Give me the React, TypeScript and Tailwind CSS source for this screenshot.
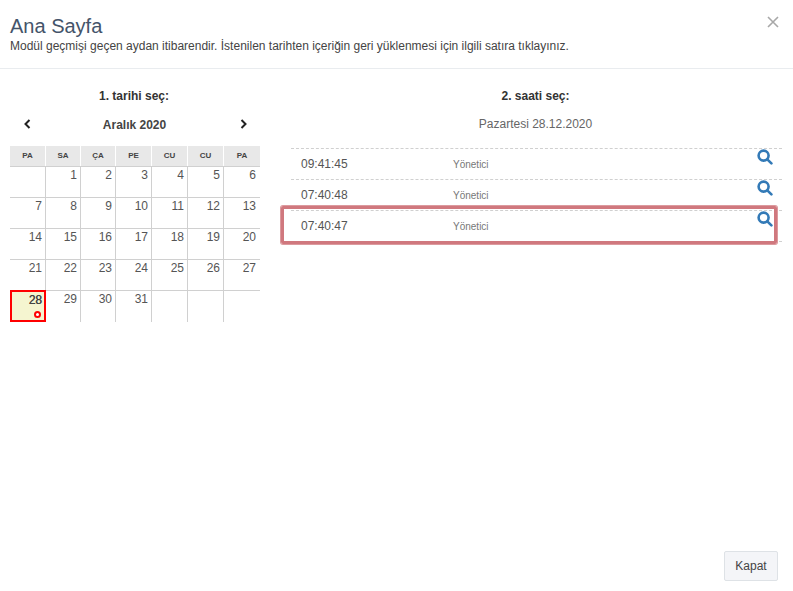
import React from 'react';

const days = ['PA', 'SA', 'ÇA', 'PE', 'CU', 'CU', 'PA'];
const cells: (number | null)[] = [null, ...Array.from({ length: 31 }, (_, i) => i + 1), null, null, null];
const colWidths = 'grid grid-cols-[36px_35px_35px_36px_36px_36px_36px]';
const times = ['09:41:45', '07:40:48', '07:40:47'];

const SearchIcon = () => (
  <svg width="16" height="16" viewBox="0 0 16 16" fill="none" stroke="#337ab7" strokeWidth="2.6">
    <circle cx="6.6" cy="6.6" r="5" />
    <path d="M10.3 10.3 L14.4 14.4" strokeLinecap="round" />
  </svg>
);

const App = () => {
  return (
    <div className="relative flex h-[591px] w-[793px] flex-col overflow-hidden bg-white font-['Liberation_Sans',Arial,sans-serif] text-[#333]">
      <div className="relative h-[69px] border-b border-[#e9ecef] pl-[10px] pt-[14px]">
        <h1 className="text-[20px] leading-[24px] text-[#44546a]">Ana Sayfa</h1>
        <p className="text-[12px] leading-[16px] text-[#444]">
          Modül geçmişi geçen aydan itibarendir. İstenilen tarihten içeriğin geri yüklenmesi için ilgili satıra tıklayınız.
        </p>
        <svg className="absolute left-[767px] top-[16px]" width="12" height="12" viewBox="0 0 12 12" stroke="#a8a8a8" strokeWidth="1.6">
          <path d="M1 1 L11 11 M11 1 L1 11" />
        </svg>
      </div>

      <div className="flex flex-1 pl-[10px]">
        <div className="w-[250px]">
          <div className="pr-[2px] pt-[20px] text-center text-[12px] font-bold leading-[14px]">1. tarihi seç:</div>
          <div className="mt-[12px] flex h-[20px] items-center justify-between pl-[13px] pr-[12px]">
            <svg className="-mt-[2px]" width="9" height="10" viewBox="0 0 9 10" fill="none" stroke="#222" strokeWidth="2">
              <path d="M6.5 1 L2.5 5 L6.5 9" />
            </svg>
            <span className="mr-[2px] text-[12px] font-bold text-[#444]">Aralık 2020</span>
            <svg className="-mt-[2px]" width="9" height="10" viewBox="0 0 9 10" fill="none" stroke="#222" strokeWidth="2">
              <path d="M2.5 1 L6.5 5 L2.5 9" />
            </svg>
          </div>
          <div className={`${colWidths} mt-[11px] h-[21px] border-b border-[#d0d0d0] bg-[#e8e8e8]`}>
            {days.map((d, i) => (
              <div
                key={i}
                className="flex items-start justify-center border-r border-white pt-[5px] text-[8px] font-bold leading-[10px] text-[#444] last:border-r-0"
              >
                {d}
              </div>
            ))}
          </div>
          <div className={colWidths}>
            {cells.map((c, i) =>
              c === 28 ? (
                <div
                  key={i}
                  className="relative -mt-px h-[32px] border-[2px] border-[#f00] bg-[#f5f5d0] pr-[2px] text-right text-[12px] leading-[17px] text-[#444] [text-shadow:0.3px_0_0_#444]"
                >
                  {c}
                  <span className="absolute bottom-[2px] right-[3px] h-[7px] w-[7px] rounded-full border-[2px] border-[#f00] bg-white" />
                </div>
              ) : (
                <div
                  key={i}
                  className={`h-[31px] border-[#d0d0d0] text-right text-[12px] leading-[16px] text-[#555] ${
                    i < 28 ? 'border-b' : ''
                  } ${i % 7 === 6 ? 'pr-[4px]' : 'border-r pr-[3px]'}`}
                >
                  {c}
                </div>
              ),
            )}
          </div>
        </div>

        <div className="ml-[31px] w-[491px]">
          <div className="pr-[2px] pt-[20px] text-center text-[12px] font-bold leading-[14px]">2. saati seç:</div>
          <div className="mt-[11px] h-[20px] pr-[2px] text-center text-[12px] leading-[20px] text-[#666]">Pazartesi 28.12.2020</div>
          <div className="mt-[14px]">
            {times.map((t) => (
              <div key={t} className="relative flex h-[31px] items-center border-t border-dashed border-[#d0d0d0] pl-[10px]">
                <span className="w-[152px] text-[12px] text-[#555]">{t}</span>
                <span className="mt-[1px] text-[10px] text-[#777]">Yönetici</span>
                <div className="absolute right-[9px] top-[0px]">
                  <SearchIcon />
                </div>
              </div>
            ))}
            <div className="border-t border-dashed border-[#d0d0d0]" />
          </div>
        </div>
      </div>

      <div className="absolute left-[281px] top-[206px] h-[38px] w-[496px] rounded-[2px] border-[3px] border-[#d0787e] shadow-[0_0_0_1px_#dc9a9e]" />

      <div className="flex justify-end pb-[10px] pr-[15px]">
        <button className="h-[30px] w-[54px] rounded-[2px] border border-[#dee2e6] bg-[#f4f5f8] text-[12px] text-[#444]">Kapat</button>
      </div>
    </div>
  );
};

export default App;
